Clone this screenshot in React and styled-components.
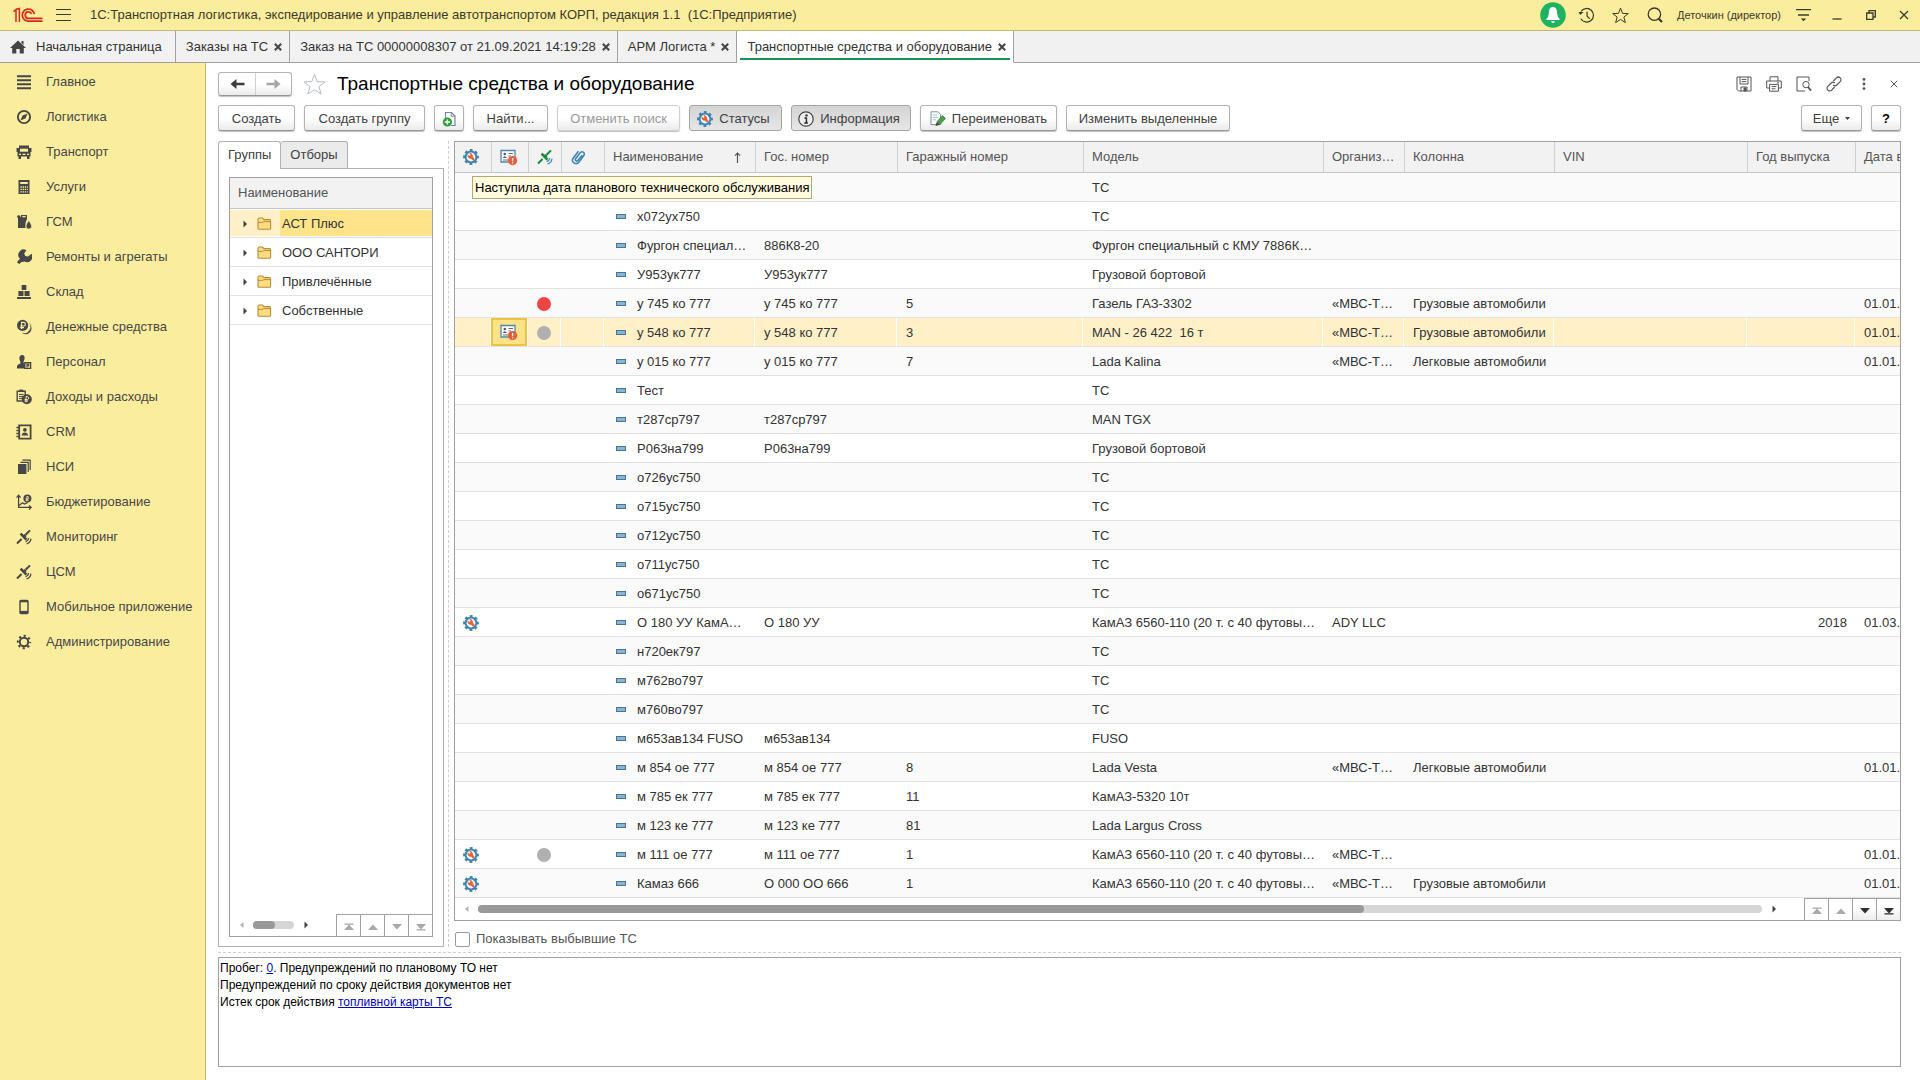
import React from 'react'
import styled, { createGlobalStyle, css } from 'styled-components'

const GlobalStyle = createGlobalStyle`
    * {
        box-sizing: border-box;
    }
    body {
        margin: 0;
        background: #fff;
        color: #333;
        font-family: "Liberation Sans", Arial, sans-serif;
        font-size: 13px;
        line-height: 16px;
    }
    button, input {
        font: inherit;
        color: inherit;
    }
    svg {
        display: block;
        flex: none;
    }
`

/* ---------- icons ---------- */

const Icon = ({ size = 16, w = size, h = size, box = 16, children, ...rest }) => (
    <svg
        width = {w}
        height = {h}
        viewBox = {typeof box === 'number' ? `0 0 ${box} ${box}` : box}
        fill = "none"
        stroke = "currentColor"
        aria-hidden = "true"
        {...rest}
    >
        { children }
    </svg>
)

const Logo = () => (
    <Icon w = {30} h = {16} box = "0 0 30 16" stroke = "#d5291f" strokeWidth = "1.5">
        <path d = "M0.4 4.6 L3 2.6 V15 M2.6 2.4 L6.4 1.4 V15"/>
        <path d = "M21.4 7 A6.1 6.1 0 1 0 15.3 14.2 H29.5" strokeWidth = "1.7"/>
        <path d = "M18.6 7 A3.3 3.3 0 1 0 15.3 11.4 H29.5" strokeWidth = "1.7"/>
    </Icon>
)

const MenuLines = () => (
    <Icon w = {15} h = {14} box = "0 0 15 14" strokeWidth = "1.2">
        <path d = "M0 1.5H15M0 6.5H15M0 12.5H15"/>
    </Icon>
)

const HomeIcon = () => (
    <Icon w = {16} h = {14} box = "0 0 16 14" fill = "#444" stroke = "none">
        <path d = "M8 0.5 L16 8 H13.8 V13.5 H9.7 V9 H6.3 V13.5 H2.2 V8 H0 Z M11.5 1 H13.5 V5 L11.5 3 Z"/>
    </Icon>
)

const Cross = ({ size = 8, weight = 2 }) => (
    <Icon size = {size} box = {8} strokeWidth = {weight}>
        <path d = "M0.8 0.8 L7.2 7.2 M7.2 0.8 L0.8 7.2"/>
    </Icon>
)

const GearWrench = () => (
    <Icon size = {16}>
        <circle cx = "8" cy = "8" r = "6.8" stroke = "#3d84b0" strokeWidth = "2.2" strokeDasharray = "2.8 2.54" strokeDashoffset = "1.4"/>
        <circle cx = "8" cy = "8" r = "5.4" stroke = "#3d84b0" strokeWidth = "2" fill = "#fff"/>
        <path d = "M4.8 5.4 L6.4 7 L7.6 5.8 L6.2 4.2 A3 3 0 0 1 9.9 7.7 L11.8 9.9 L10.2 11.7 L7.9 9.6 A3 3 0 0 1 4.8 5.4 Z" fill = "#e8603c" stroke = "none"/>
    </Icon>
)

const CardAlert = () => (
    <Icon w = {18} h = {17} box = "0 0 18 17">
        <path d = "M1 1.5 H15 V13 H1 Z" fill = "#fff" stroke = "#4e88ad" strokeWidth = "1.3"/>
        <circle cx = "4.8" cy = "5" r = "1.3" fill = "#555" stroke = "none"/>
        <path d = "M2.8 9 Q4.8 5.6 6.8 9 Z" fill = "#555" stroke = "none"/>
        <path d = "M8.5 4.5 H13 M8.5 7 H11 M3 11 H9" stroke = "#666"/>
        <circle cx = "12.6" cy = "11.6" r = "4.6" fill = "#ea5b3a" stroke = "none"/>
        <path d = "M12.6 9 V12.2 M12.6 13.2 V14.4" stroke = "#fff" strokeWidth = "1.3"/>
    </Icon>
)

const Satellite = ({ color = '#474747', wave = color, size = 16 }) => (
    <Icon size = {size} stroke = {color}>
        <path d = "M1 14.5 L5.6 10" strokeWidth = "2"/>
        <path d = "M4.6 4.6 L10.4 10.6" strokeWidth = "2.6"/>
        <path d = "M7.2 8.4 L9.6 6" strokeWidth = "3"/>
        <path d = "M9.6 5.8 L14 1.4" strokeWidth = "2"/>
        <path d = "M12.6 9 A4 4 0 0 1 9.6 12.6 M15 9.6 A6.4 6.4 0 0 1 10.4 15" stroke = {wave} strokeWidth = "1.2"/>
    </Icon>
)

const Clip = () => (
    <Icon size = {16} stroke = "#3f86b5" strokeWidth = "1.6">
        <path d = "M12.2 6.2 L7.8 11.4 C6.4 12.8 4.6 11.2 5.8 9.6 L10 4 C11.8 1.4 15.4 3.4 13.8 6.6 L9 13 C6.4 16.4 0.8 13.8 3 9.4 L8.4 2.2"/>
    </Icon>
)

const Folder = () => (
    <Icon w = {15} h = {13} box = "0 0 15 13">
        <path d = "M1 11.5 V2.5 Q1 1 2.2 1 H5.4 L7 2.6 H12.4 Q13.6 2.6 13.6 4 V11.5 Q13.6 12.3 12.8 12.3 H1.8 Q1 12.3 1 11.5 Z" fill = "#fbdc82" stroke = "#b98d35" strokeWidth = "1.1"/>
        <path d = "M1 5.4 H5.4 L6.8 4.6 H13.6" stroke = "#b98d35"/>
    </Icon>
)

const NewCopy = () => (
    <Icon w = {15} h = {16} box = "0 0 15 16">
        <path d = "M3.5 8 V1.5 H9.5 L13 5 V14.5 H9" fill = "#fff" stroke = "#75879a" strokeWidth = "1.2"/>
        <path d = "M9.3 1.5 V5.2 H13" stroke = "#75879a"/>
        <circle cx = "5.4" cy = "11" r = "4.6" fill = "#2f9e3c" stroke = "none"/>
        <path d = "M5.4 8.4 V13.6 M2.8 11 H8" stroke = "#fff" strokeWidth = "1.4"/>
    </Icon>
)

const InfoIcon = () => (
    <Icon size = {16}>
        <circle cx = "8" cy = "8" r = "7.2" strokeWidth = "1.2" stroke = "#444" fill = "#eee"/>
        <circle cx = "8.5" cy = "4.4" r = "1.2" fill = "#333" stroke = "none"/>
        <path d = "M6.4 7 H8.4 V11.6 M6.2 11.9 H10" stroke = "#333" strokeWidth = "1.5"/>
    </Icon>
)

const RenameIcon = () => (
    <Icon size = {16}>
        <path d = "M1 0.8 H8 L10.6 3.4 V13.6 H1 Z" fill = "#fff" stroke = "#7c8fa1"/>
        <path d = "M2.8 4 H7 M2.8 6.4 H8 M2.8 8.8 H6" stroke = "#a9b8c6"/>
        <path d = "M6.8 11 L12.4 4.6 L15.6 7.4 L9.8 13.6 Z" fill = "#49a24b" stroke = "#2c7a34" strokeWidth = "0.7"/>
        <path d = "M6.8 11 L9.8 13.6 L5.4 15.2 Z" fill = "#444" stroke = "none"/>
    </Icon>
)

const ArrowLong = ({ back }) => (
    <Icon w = {15} h = {12} box = "0 0 15 12" stroke = "none" fill = "currentColor">
        {back
            ? <path d = "M0.5 6 L6.5 1 V4.8 H14.5 V7.2 H6.5 V11 Z"/>
            : <path d = "M14.5 6 L8.5 1 V4.8 H0.5 V7.2 H8.5 V11 Z"/>}
    </Icon>
)

const Star = ({ size, color }) => (
    <Icon size = {size} box = {24} stroke = {color} strokeWidth = {24 / size}>
        <path d = "M12 1.5 L14.9 9 L23 9.3 L16.7 14.2 L18.9 22 L12 17.5 L5.1 22 L7.3 14.2 L1 9.3 L9.1 9 Z"/>
    </Icon>
)

const Triangle = ({ dir, bar }) => (
    <Icon w = {10} h = {8} box = "0 0 10 8" stroke = "none" fill = "currentColor">
        {dir === 'up' && <path d = "M0 7 L5 1.5 L10 7 Z"/>}
        {dir === 'down' && <path d = "M0 1 L5 6.5 L10 1 Z"/>}
        {dir === 'left' && <path d = "M6.5 1 V7 L3 4 Z"/>}
        {dir === 'right' && <path d = "M3.5 0.5 V7.5 L7 4 Z"/>}
        {bar && <path d = {dir === 'up' ? 'M0.5 0.5 H9.5 V1.8 H0.5 Z' : 'M0.5 6.2 H9.5 V7.5 H0.5 Z'}/>}
    </Icon>
)

const navIcons = {
    main: <path d = "M1 2.2H15M1 6.2H15M1 10.2H15M1 14.2H15" strokeWidth = "2"/>,
    compass: <>
        <circle cx = "8" cy = "8" r = "6.1" strokeWidth = "1.9"/>
        <path d = "M11.6 4.4 L9.4 9.4 L4.4 11.6 L6.6 6.6 Z" fill = "currentColor" stroke = "none"/>
    </>,
    truck: <>
        <path d = "M3 1.5 H13 V4 H15.5 V8 H14.5 V12.5 H13.5 V15 H11 V12.5 H5 V15 H2.5 V12.5 H1.5 V8 H0.5 V4 H3 Z" fill = "currentColor" stroke = "none"/>
        <path d = "M4 6.2 H12" stroke = "#fbed9e" strokeWidth = "3"/>
        <path d = "M3 10.4 H5 M6.5 10.4 H9.5 M11 10.4 H13" stroke = "#fbed9e" strokeWidth = "1.3"/>
    </>,
    calc: <>
        <path d = "M2.5 1 H13.5 V15 H2.5 Z" fill = "currentColor" stroke = "none"/>
        <path d = "M4.2 4 H11.8" stroke = "#fbed9e" strokeWidth = "2"/>
        <path d = "M4.4 8H11.8M4.4 10.4H11.8M4.4 12.8H11.8" stroke = "#fbed9e" strokeWidth = "1.3" strokeDasharray = "1.4 0.8"/>
    </>,
    fuel: <>
        <path d = "M1 2 L3 1 L5 3 V1 H11 V5 L9.5 9 V14 H2 V5 Z" fill = "currentColor" stroke = "none"/>
        <path d = "M6.4 2.6 H9.6" stroke = "#fbed9e" strokeWidth = "1.3"/>
        <path d = "M12.8 6.5 Q15.6 10.4 15.6 12.2 A2.8 2.8 0 0 1 10 12.2 Q10 10.4 12.8 6.5 Z" fill = "currentColor" stroke = "#fbed9e" strokeWidth = "0.7"/>
    </>,
    wrench: <path d = "M2.2 11.6 L4 9.8 A5.4 5.4 0 0 1 10.4 1.2 L8.2 4.4 L9.2 7 L12 7.6 L15.4 4.8 A5.4 5.4 0 0 1 8.4 12.6 L5 13.2 L3.6 15 L1 13.6 Z" fill = "currentColor" stroke = "none"/>,
    stock: <path d = "M5.6 1 H10.4 V6 H5.6 Z M2.4 7 H7.5 V12 H2.4 Z M8.5 7 H13.6 V12 H8.5 Z M1 13 H15 V15 H1 Z" fill = "currentColor" stroke = "none"/>,
    coins: <>
        <path d = "M12.6 3.6 A6.2 6.2 0 0 1 5.6 13.6 A5.8 5.8 0 0 0 15.4 9 A6 6 0 0 0 12.6 3.6 Z" fill = "currentColor" stroke = "none"/>
        <circle cx = "6.6" cy = "6.4" r = "5.6" fill = "currentColor" stroke = "none"/>
        <path d = "M5.6 10 V3.4 H7.6 A1.8 1.8 0 0 1 7.6 7 H4.2 M4.2 8.6 H8" stroke = "#fbed9e" strokeWidth = "1.1"/>
    </>,
    person: <>
        <path d = "M6 1 C8.6 1 9 3.4 8.4 5.4 L7.6 7.4 V9 L9 10 V14.6 H1 V12.2 Q1 10.8 4.4 9.6 V7.4 C2.8 5 3 1 6 1 Z" fill = "currentColor" stroke = "none"/>
        <path d = "M8.8 8.8 H14.6 V14.4 H8.8 Z" strokeWidth = "1.4" fill = "#fbed9e"/>
        <path d = "M11 13.4 V10.4 H12.6 V12 H11" strokeWidth = "1.1"/>
    </>,
    income: <>
        <path d = "M1.2 2.2 H9.2 V12 H1.2 Z" strokeWidth = "1.4"/>
        <path d = "M3.2 0.6 H7.2 V3 H3.2 Z" fill = "currentColor" stroke = "none"/>
        <path d = "M3 5.4 H7.6 M3 7.4 H7 M3 9.4 H6"/>
        <circle cx = "10.8" cy = "10.2" r = "5" fill = "currentColor" stroke = "none"/>
        <path d = "M10 13.4 V7.6 H11.6 A1.6 1.6 0 0 1 11.6 10.6 H8.6 M8.6 12 H12" stroke = "#fbed9e"/>
    </>,
    crm: <>
        <path d = "M3.2 1.4 H14.6 V14.6 H3.2 Z" strokeWidth = "1.8"/>
        <path d = "M0.4 3.4H3M0.4 6.4H3M0.4 9.4H3M0.4 12.4H3" strokeWidth = "1.5"/>
        <circle cx = "8.9" cy = "5.8" r = "1.9" fill = "currentColor" stroke = "none"/>
        <path d = "M5.6 11.6 Q5.8 8.8 8.9 8.4 Q12 8.8 12.2 11.6 Z" fill = "currentColor" stroke = "none"/>
    </>,
    docs: <>
        <path d = "M2 5 H10.4 V15 H2 Z" fill = "currentColor" stroke = "none"/>
        <path d = "M4.4 3.4 H12.2 V13 M6.4 1.2 H14.2 V11" strokeWidth = "1.2"/>
    </>,
    budget: <>
        <path d = "M2.6 1.4 V13.4 H15 M0.6 3.6 L2.6 1.2 L4.6 3.6 M13 11.4 L15.2 13.4 L13 15.4" strokeWidth = "1.3"/>
        <path d = "M3 11.4 L6.6 8.8 L8.4 10 L11.6 8.6" strokeWidth = "1.2"/>
        <circle cx = "11.4" cy = "4.6" r = "4" fill = "currentColor" stroke = "none"/>
        <path d = "M10.8 7.4 V2.6 H12.2 V5 H9.6 M9.6 6.2 H12.6" stroke = "#fbed9e" strokeWidth = "0.9"/>
    </>,
    phone: <>
        <path d = "M5 1.5 H11 Q12 1.5 12 2.5 V13.5 Q12 14.5 11 14.5 H5 Q4 14.5 4 13.5 V2.5 Q4 1.5 5 1.5 Z" strokeWidth = "1.4"/>
        <path d = "M4 13.2 H12" strokeWidth = "2.6"/>
        <path d = "M4 2.6 H12" strokeWidth = "1.4"/>
    </>,
    gear: <>
        <circle cx = "8" cy = "8" r = "6.2" strokeWidth = "2" strokeDasharray = "2.2 2.67" strokeDashoffset = "1.1"/>
        <circle cx = "8" cy = "8" r = "4.2" strokeWidth = "2"/>
    </>
}

const NavIcon = ({ name }) => (
    name === 'satellite' ? <Satellite/> : <Icon size = {16}>{ navIcons[name] }</Icon>
)

/* ---------- data ---------- */

const sections = [
    ['main', 'Главное'],
    ['compass', 'Логистика'],
    ['truck', 'Транспорт'],
    ['calc', 'Услуги'],
    ['fuel', 'ГСМ'],
    ['wrench', 'Ремонты и агрегаты'],
    ['stock', 'Склад'],
    ['coins', 'Денежные средства'],
    ['person', 'Персонал'],
    ['income', 'Доходы и расходы'],
    ['crm', 'CRM'],
    ['docs', 'НСИ'],
    ['budget', 'Бюджетирование'],
    ['satellite', 'Мониторинг'],
    ['satellite', 'ЦСМ'],
    ['phone', 'Мобильное приложение'],
    ['gear', 'Администрирование']
]

const openTabs = [
    { title: 'Заказы на ТС' },
    { title: 'Заказ на ТС 00000008307 от 21.09.2021 14:19:28' },
    { title: 'АРМ Логиста *' },
    { title: 'Транспортные средства и оборудование', active: true }
]

const groups = ['АСТ Плюс', 'ООО САНТОРИ', 'Привлечённые', 'Собственные']

const vehicles = [
    { model: 'ТС' },
    { name: 'х072ух750', model: 'ТС' },
    { name: 'Фургон специал…', plate: '886К8-20', model: 'Фургон специальный с КМУ 7886К…' },
    { name: 'У953ук777', plate: 'У953ук777', model: 'Грузовой бортовой' },
    { dot: '#ee4444', name: 'у 745 ко 777', plate: 'у 745 ко 777', garage: '5', model: 'Газель ГАЗ-3302', org: '«МВС-Т…', column: 'Грузовые автомобили', date: '01.01.' },
    { selected: true, card: true, dot: '#b0b0b0', name: 'у 548 ко 777', plate: 'у 548 ко 777', garage: '3', model: 'MAN - 26 422  16 т', org: '«МВС-Т…', column: 'Грузовые автомобили', date: '01.01.' },
    { name: 'у 015 ко 777', plate: 'у 015 ко 777', garage: '7', model: 'Lada Kalina', org: '«МВС-Т…', column: 'Легковые автомобили', date: '01.01.' },
    { name: 'Тест', model: 'ТС' },
    { name: 'т287ср797', plate: 'т287ср797', model: 'MAN TGX' },
    { name: 'Р063на799', plate: 'Р063на799', model: 'Грузовой бортовой' },
    { name: 'о726ус750', model: 'ТС' },
    { name: 'о715ус750', model: 'ТС' },
    { name: 'о712ус750', model: 'ТС' },
    { name: 'о711ус750', model: 'ТС' },
    { name: 'о671ус750', model: 'ТС' },
    { service: true, name: 'О 180 УУ КамА…', plate: 'О 180 УУ', model: 'КамАЗ 6560-110 (20 т. с 40 футовы…', org: 'ADY LLC', year: '2018', date: '01.03.' },
    { name: 'н720ек797', model: 'ТС' },
    { name: 'м762во797', model: 'ТС' },
    { name: 'м760во797', model: 'ТС' },
    { name: 'м653ав134 FUSO', plate: 'м653ав134', model: 'FUSO' },
    { name: 'м 854 ое 777', plate: 'м 854 ое 777', garage: '8', model: 'Lada Vesta', org: '«МВС-Т…', column: 'Легковые автомобили', date: '01.01.' },
    { name: 'м 785 ек 777', plate: 'м 785 ек 777', garage: '11', model: 'КамАЗ-5320 10т' },
    { name: 'м 123 ке 777', plate: 'м 123 ке 777', garage: '81', model: 'Lada Largus Cross' },
    { service: true, dot: '#b0b0b0', name: 'м 111 ое 777', plate: 'м 111 ое 777', garage: '1', model: 'КамАЗ 6560-110 (20 т. с 40 футовы…', org: '«МВС-Т…', date: '01.01.' },
    { service: true, name: 'Камаз 666', plate: 'О 000 ОО 666', garage: '1', model: 'КамАЗ 6560-110 (20 т. с 40 футовы…', org: '«МВС-Т…', column: 'Грузовые автомобили', date: '01.01.' }
]

/* ---------- page parts ---------- */

const TopBar = () => (
    <TopBarRoot>
        <Logo/>
        <PlainButton aria-label = "Главное меню"><MenuLines/></PlainButton>
        <AppTitle>1С:Транспортная логистика, экспедирование и управление автотранспортом КОРП, редакция 1.1  (1С:Предприятие)</AppTitle>
        <TopTools>
            <ToolSlot aria-label = "Оповещения">
                <Icon w = {26} h = {26} box = "0 0 26 26" stroke = "none">
                    <circle cx = "13" cy = "13" r = "12.8" fill = "#1fb261"/>
                    <path d = "M13 5 C16.4 5 17 8 17.2 11.5 Q17.4 15 19.6 16.8 V18 H6.4 V16.8 Q8.6 15 8.8 11.5 C9 8 9.6 5 13 5 Z M11 19.2 H15 Q14.6 21 13 21 Q11.4 21 11 19.2 Z" fill = "#fff"/>
                </Icon>
            </ToolSlot>
            <ToolSlot aria-label = "История">
                <Icon size = {17} box = {18} strokeWidth = "1.3">
                    <path d = "M3.2 4.8 A7.2 7.2 0 1 1 3 12.4 M9.6 5 V9.6 L12.4 12.4"/>
                    <path d = "M0.4 5.2 H5.8 L2.6 8.4 Z" fill = "currentColor" stroke = "none"/>
                </Icon>
            </ToolSlot>
            <ToolSlot aria-label = "Избранное"><Star size = {17} color = "#3c3a2a"/></ToolSlot>
            <ToolSlot aria-label = "Поиск">
                <Icon size = {16} strokeWidth = "1.3">
                    <circle cx = "7.4" cy = "7.2" r = "6.2"/>
                    <path d = "M11.8 11.8 L15 15" strokeWidth = "2.2"/>
                </Icon>
            </ToolSlot>
            <UserName>Деточкин (директор)</UserName>
            <ToolSlot aria-label = "Сервис">
                <Icon w = {15} h = {14} box = "0 0 15 14" strokeWidth = "1.3">
                    <path d = "M0 1.6 H15 M2 7 H13"/>
                    <path d = "M4.8 10.4 H10.2 L7.5 13.2 Z" fill = "currentColor" stroke = "none"/>
                </Icon>
            </ToolSlot>
            <ToolSlot aria-label = "Свернуть"><Icon size = {10} box = {10} strokeWidth = "1.3"><path d = "M0.5 9 H9.5"/></Icon></ToolSlot>
            <ToolSlot aria-label = "Развернуть">
                <Icon size = {10} box = {10} strokeWidth = "1.3"><path d = "M0.7 3 H7 V9.3 H0.7 Z M3 3 V0.7 H9.3 V7 H7"/></Icon>
            </ToolSlot>
            <ToolSlot aria-label = "Закрыть"><Cross size = {10} weight = {1}/></ToolSlot>
        </TopTools>
    </TopBarRoot>
)

const WindowTabs = () => (
    <TabStrip>
        <WindowTab $home>
            <HomeIcon/>
            Начальная страница
        </WindowTab>
        {openTabs.map(tab => (
            <WindowTab key = {tab.title} $active = {tab.active}>
                <span>{tab.title}</span>
                <CloseTab aria-label = "Закрыть вкладку"><Cross/></CloseTab>
            </WindowTab>
        ))}
        <TabFiller/>
    </TabStrip>
)

const FormHeader = () => (
    <HeaderRow>
        <NavGroup>
            <NavButton aria-label = "Назад"><ArrowLong back/></NavButton>
            <NavButton aria-label = "Вперед" disabled><ArrowLong/></NavButton>
        </NavGroup>
        <PlainButton aria-label = "В избранное"><Star size = {23} color = "#b5bac2"/></PlainButton>
        <h1>Транспортные средства и оборудование</h1>
        <FormTools>
            <FormTool aria-label = "Сохранить">
                <Icon><path d = "M1 1 H15 V15 H2.6 L1 13.4 Z M4 1 V8 H12 V1 M5.6 3.4 H10.4 M5.6 5.6 H10.4 M5 15 V11 H11 V15"/><path d = "M8 12 H10 V15 H8 Z" fill = "currentColor"/></Icon>
            </FormTool>
            <FormTool aria-label = "Печать">
                <Icon><path d = "M4 5 V0.8 H12 V5 M3.6 12 H0.7 V5 H15.3 V12 H12.4 M3.6 8.4 H12.4 V15.2 H3.6 Z M5.6 10.6 H10.4 M5.6 12.8 H9.4 M11 6.8 H13"/></Icon>
            </FormTool>
            <FormTool aria-label = "Предварительный просмотр">
                <Icon><path d = "M13 5 V1 H1 V15 H9"/><circle cx = "10" cy = "8.6" r = "3.2"/><path d = "M12 11 L15 14.6" strokeWidth = "1.8"/></Icon>
            </FormTool>
            <FormTool aria-label = "Ссылка">
                <Icon strokeWidth = "1.2"><path d = "M7.4 5 L10.4 1.9 A2.6 2.6 0 0 1 14.2 5.6 L10.8 9 A2.6 2.6 0 0 1 7.2 9 M8.6 11 L5.6 14.1 A2.6 2.6 0 0 1 1.8 10.4 L5.2 7 A2.6 2.6 0 0 1 8.8 7"/></Icon>
            </FormTool>
            <FormTool aria-label = "Еще">
                <Icon fill = "currentColor" stroke = "none"><circle cx = "8" cy = "3.4" r = "1.4"/><circle cx = "8" cy = "8" r = "1.4"/><circle cx = "8" cy = "12.6" r = "1.4"/></Icon>
            </FormTool>
            <FormTool aria-label = "Закрыть"><Cross weight = {1}/></FormTool>
        </FormTools>
    </HeaderRow>
)

const Toolbar = () => (
    <ToolbarRow>
        <Button $w = {77}>Создать</Button>
        <Button $w = {121}>Создать группу</Button>
        <Button $w = {30} aria-label = "Скопировать"><NewCopy/></Button>
        <Button $w = {75}>Найти...</Button>
        <Button $w = {123} disabled>Отменить поиск</Button>
        <Button $w = {93} $pressed><GearWrench/>Статусы</Button>
        <Button $w = {120} $pressed><InfoIcon/>Информация</Button>
        <Button $w = {137}><RenameIcon/>Переименовать</Button>
        <Button $w = {164}>Изменить выделенные</Button>
        <Spacer/>
        <Button $w = {61}>
            Еще
            <Icon w = {5} h = {3} box = "0 0 5 3" fill = "currentColor" stroke = "none"><path d = "M0 0 H5 L2.5 3 Z"/></Icon>
        </Button>
        <Button $w = {30} $dark>?</Button>
    </ToolbarRow>
)

const Pager = ({ forward }) => (
    <PagerRoot>
        <PagerButton disabled aria-label = "В начало"><Triangle dir = "up" bar/></PagerButton>
        <PagerButton disabled aria-label = "Вверх"><Triangle dir = "up"/></PagerButton>
        <PagerButton disabled = {!forward} aria-label = "Вниз"><Triangle dir = "down"/></PagerButton>
        <PagerButton disabled = {!forward} aria-label = "В конец"><Triangle dir = "down" bar/></PagerButton>
    </PagerRoot>
)

const GroupsPanel = () => (
    <SidePanel>
        <PanelTabs>
            <PanelTab $active>Группы</PanelTab>
            <PanelTab>Отборы</PanelTab>
        </PanelTabs>
        <PanelBody>
            <Tree>
                <TreeHead>Наименование</TreeHead>
                {groups.map((group, i) => (
                    <TreeRow key = {group}>
                        <TreeMarks $active = {i === 0}><Triangle dir = "right"/><Folder/></TreeMarks>
                        <TreeName $active = {i === 0}>{group}</TreeName>
                    </TreeRow>
                ))}
                <Spacer/>
                <ScrollRow>
                    <ScrollArrow $muted><Triangle dir = "left"/></ScrollArrow>
                    <Track $w = "41px"><Thumb $w = "53%"/></Track>
                    <ScrollArrow><Triangle dir = "right"/></ScrollArrow>
                    <Spacer/>
                    <Pager/>
                </ScrollRow>
            </Tree>
        </PanelBody>
    </SidePanel>
)

const VehicleRow = ({ item }) => (
    <Row $selected = {item.selected}>
        <IconCell>{item.service && <GearWrench/>}</IconCell>
        <IconCell $current = {item.card}>{item.card && <CardAlert/>}</IconCell>
        <IconCell>{item.dot && <Dot $color = {item.dot}/>}</IconCell>
        <IconCell/>
        <Cell>{item.name && <NameBox><Dash/>{item.name}</NameBox>}</Cell>
        <Cell>{item.plate}</Cell>
        <Cell>{item.garage}</Cell>
        <Cell>{item.model}</Cell>
        <Cell>{item.org}</Cell>
        <Cell>{item.column}</Cell>
        <Cell/>
        <Cell $right>{item.year}</Cell>
        <Cell>{item.date}</Cell>
    </Row>
)

const VehicleList = () => (
    <ListColumn>
        <ListFrame>
            <Table>
                <colgroup>
                    {[36, 37, 33, 43, 151, 142, 186, 240, 81, 150, 193, 108].map((width, i) => <Col key = {i} $w = {width}/>)}
                    <col/>
                </colgroup>
                <thead>
                    <tr>
                        <HeadCell $icon aria-label = "Состояние"><GearWrench/></HeadCell>
                        <HeadCell $icon aria-label = "Документы"><CardAlert/></HeadCell>
                        <HeadCell $icon aria-label = "Мониторинг"><Satellite color = "#178a3e" wave = "#3f86b5"/></HeadCell>
                        <HeadCell $icon aria-label = "Файлы"><Clip/></HeadCell>
                        <HeadCell>
                            <SortBox>
                                Наименование
                                <Icon w = {7} h = {11} box = "0 0 7 11" strokeWidth = "1.2"><path d = "M3.5 11 V1 M1 3.6 L3.5 1 L6 3.6"/></Icon>
                            </SortBox>
                        </HeadCell>
                        <HeadCell>Гос. номер</HeadCell>
                        <HeadCell>Гаражный номер</HeadCell>
                        <HeadCell>Модель</HeadCell>
                        <HeadCell>Организ…</HeadCell>
                        <HeadCell>Колонна</HeadCell>
                        <HeadCell>VIN</HeadCell>
                        <HeadCell>Год выпуска</HeadCell>
                        <HeadCell>Дата в</HeadCell>
                    </tr>
                </thead>
                <tbody>
                    {vehicles.map((item, i) => <VehicleRow key = {i} item = {item}/>)}
                </tbody>
            </Table>
            <Spacer/>
            <ScrollRow>
                <ScrollArrow $muted><Triangle dir = "left"/></ScrollArrow>
                <Track><Thumb $w = "69%"/></Track>
                <ScrollArrow><Triangle dir = "right"/></ScrollArrow>
                <PagerGap/>
                <Pager forward/>
            </ScrollRow>
            <Tooltip role = "tooltip">Наступила дата планового технического обслуживания</Tooltip>
        </ListFrame>
        <CheckLabel>
            <CheckBox type = "checkbox"/>
            Показывать выбывшие ТС
        </CheckLabel>
    </ListColumn>
)

const App = () => (
    <Page>
        <GlobalStyle/>
        <TopBar/>
        <WindowTabs/>
        <Body>
            <Sections>
                {sections.map(([icon, title]) => (
                    <SectionLink key = {title} href = "#"><NavIcon name = {icon}/>{title}</SectionLink>
                ))}
            </Sections>
            <Main>
                <FormHeader/>
                <Toolbar/>
                <Workspace>
                    <GroupsPanel/>
                    <Splitter/>
                    <VehicleList/>
                </Workspace>
                <InfoBox>
                    <div>Пробег: <a href = "#">0</a>. Предупреждений по плановому ТО нет</div>
                    <div>Предупреждений по сроку действия документов нет</div>
                    <div>Истек срок действия <a href = "#">топливной карты ТС</a></div>
                </InfoBox>
            </Main>
        </Body>
    </Page>
)

/* ---------- styles ---------- */

const Page = styled.div`
    min-height: 100vh;
    display: flex;
    flex-direction: column;
`

const Spacer = styled.div`
    flex: 1;
`

const PlainButton = styled.button`
    display: flex;
    align-items: center;
    justify-content: center;
    padding: 0;
    border: 0;
    background: none;
`

const TopBarRoot = styled.header`
    display: flex;
    align-items: center;
    height: 31px;
    padding-left: 13px;
    gap: 13px;
    background: #fbed9e;
    border-bottom: 1px solid #c4b878;
    color: #3c3a2a;
`

const AppTitle = styled.div`
    margin-left: 6px;
    flex: 1;
    white-space: pre;
    overflow: hidden;
`

const TopTools = styled.div`
    display: flex;
    align-items: center;
    height: 30px;
`

const ToolSlot = styled(PlainButton)`
    width: 34px;
    height: 30px;
    &:last-child {
        width: 32px;
    }
`

const UserName = styled.div`
    padding: 0 5px;
    font-size: 11px;
`

const TabStrip = styled.nav`
    display: flex;
    height: 32px;
    background: #f1f1f1;
`

const WindowTab = styled.div`
    display: flex;
    align-items: center;
    gap: 6px;
    padding: 0 7px 0 10px;
    border-right: 1px solid #a0a0a0;
    border-bottom: 1px solid #a0a0a0;
    white-space: nowrap;
    ${p => p.$home && css`
        gap: 10px;
        padding: 0 13px 0 10px;
    `}
    ${p => p.$active && css`
        background: linear-gradient(#129556, #129556) center 27px / calc(100% - 6px) 2px no-repeat #fff;
        border-bottom-color: #fff;
    `}
`

const CloseTab = styled(PlainButton)`
    color: #444;
`

const TabFiller = styled.div`
    flex: 1;
    border-bottom: 1px solid #a0a0a0;
`

const Body = styled.div`
    flex: 1;
    display: flex;
`

const Sections = styled.nav`
    flex: none;
    width: 206px;
    background: #fbed9e;
    border-right: 1px solid #c4b878;
`

const SectionLink = styled.a`
    display: flex;
    align-items: center;
    gap: 14px;
    height: 35px;
    padding: 2px 0 0 16px;
    color: #474747;
    text-decoration: none;
`

const Main = styled.main`
    flex: 1;
    min-width: 0;
    display: flex;
    flex-direction: column;
    padding: 0 19px 13px 12px;
`

const HeaderRow = styled.div`
    display: flex;
    align-items: center;
    height: 42px;
    gap: 11px;
    h1 {
        margin: 0;
        flex: 1;
        font-size: 19px;
        line-height: 24px;
        font-weight: normal;
        color: #000;
    }
`

const raised = css`
    border: 1px solid #b4b4b4;
    border-bottom-color: #969696;
    border-radius: 3px;
    background: linear-gradient(#fff 50%, #ebebeb);
    box-shadow: 0 1px 1px #c0c0c0;
`

const NavGroup = styled.div`
    display: flex;
    height: 24px;
    ${raised}
`

const NavButton = styled(PlainButton)`
    width: 36px;
    color: #3c3c3c;
    &:disabled {
        color: #a6a6a6;
    }
    & + & {
        border-left: 1px solid #d0d0d0;
    }
`

const FormTools = styled.div`
    display: flex;
    margin-right: -8px;
    color: #555;
`

const FormTool = styled(PlainButton)`
    width: 30px;
    height: 24px;
`

const ToolbarRow = styled.div`
    display: flex;
    gap: 9px;
    margin-bottom: 10px;
`

const Button = styled.button`
    display: flex;
    align-items: center;
    justify-content: center;
    gap: 6px;
    width: ${p => p.$w}px;
    height: 26px;
    padding: 1px 0 0;
    white-space: nowrap;
    color: ${p => p.$dark ? '#000' : '#404040'};
    font-weight: ${p => p.$dark ? 'bold' : 'normal'};
    ${raised}
    ${p => p.$pressed && css`
        padding-right: 4px;
        background: linear-gradient(#d4d4d4, #e6e6e6);
        border-color: #a4a4a4;
        box-shadow: none;
    `}
    &:disabled {
        color: #999;
        border-color: #cfcfcf;
    }
`

const Workspace = styled.div`
    flex: 1;
    display: flex;
    padding-bottom: 5px;
    margin-bottom: 4px;
    border-bottom: 1px dashed #cfcfcf;
`

const Splitter = styled.div`
    width: 6px;
    margin-left: 4px;
    border-left: 1px dashed #cfcfcf;
`

const SidePanel = styled.section`
    flex: none;
    width: 226px;
    display: flex;
    flex-direction: column;
`

const PanelTabs = styled.div`
    display: flex;
    height: 27px;
`

const PanelTab = styled.button`
    height: 27px;
    padding: 0 9px;
    border: 1px solid #b0b0b0;
    border-bottom: 0;
    border-radius: 3px 3px 0 0;
    background: #ebebeb;
    color: #404040;
    & + & {
        border-left: 0;
    }
    ${p => p.$active && css`
        height: 28px;
        padding-bottom: 1px;
        background: #fff;
        z-index: 1;
    `}
`

const PanelBody = styled.div`
    flex: 1;
    display: flex;
    padding: 8px 10px 9px;
    border: 1px solid #b0b0b0;
`

const Tree = styled.div`
    flex: 1;
    display: flex;
    flex-direction: column;
    border: 1px solid #a0a0a0;
`

const TreeHead = styled.div`
    height: 31px;
    padding: 7px 8px;
    background: #f2f2f2;
    border-bottom: 1px solid #c4c4c4;
    color: #555;
`

const TreeRow = styled.div`
    display: flex;
    height: 29px;
    padding: 1px 0;
    border-bottom: 1px solid #e2e2e2;
`

const TreeMarks = styled.div`
    display: flex;
    align-items: center;
    gap: 7px;
    width: 50px;
    padding: 1px 0 0 10px;
    color: #404040;
    background: ${p => p.$active ? '#fff0c8' : 'none'};
`

const TreeName = styled.div`
    flex: 1;
    display: flex;
    align-items: center;
    padding: 1px 0 0 2px;
    background: ${p => p.$active ? '#ffe48c' : 'none'};
`

const ScrollRow = styled.div`
    display: flex;
    align-items: center;
    height: 22px;
`

const ScrollArrow = styled.div`
    display: flex;
    justify-content: center;
    width: 23px;
    color: ${p => p.$muted ? '#b4b4b4' : '#404040'};
`

const Track = styled.div`
    width: ${p => p.$w || 'auto'};
    flex: ${p => p.$w ? 'none' : 1};
    height: 8px;
    border-radius: 4px;
    background: #d6d6d6;
`

const Thumb = styled.div`
    width: ${p => p.$w};
    height: 8px;
    border-radius: 4px;
    background: #999;
`

const PagerGap = styled.div`
    width: 19px;
`

const PagerRoot = styled.div`
    display: flex;
    height: 22px;
    border-top: 1px solid #a0a0a0;
`

const PagerButton = styled(PlainButton)`
    width: 24px;
    padding-top: 2px;
    border-left: 1px solid #a0a0a0;
    background: linear-gradient(#fff 40%, #ececec);
    color: #303030;
    &:disabled {
        background: #fff;
        color: #a8a8a8;
    }
`

const ListColumn = styled.section`
    flex: 1;
    min-width: 0;
    display: flex;
    flex-direction: column;
`

const ListFrame = styled.div`
    position: relative;
    flex: 1;
    display: flex;
    flex-direction: column;
    border: 1px solid #a0a0a0;
    overflow: hidden;
`

const Table = styled.table`
    width: 100%;
    table-layout: fixed;
    border-collapse: separate;
    border-spacing: 0;
`

const Col = styled.col`
    width: ${p => p.$w}px;
`

const HeadCell = styled.th`
    height: 31px;
    padding: 0 0 0 8px;
    text-align: left;
    font-weight: normal;
    white-space: nowrap;
    overflow: hidden;
    color: #555;
    background: #f2f2f2;
    border-bottom: 1px solid #c4c4c4;
    & + & {
        border-left: 1px solid #cfcfcf;
    }
`

const SortBox = styled.div`
    display: flex;
    align-items: center;
    justify-content: space-between;
    padding-right: 14px;
`

const Cell = styled.td`
    height: 29px;
    padding: 1px 0 0 9px;
    white-space: pre;
    overflow: hidden;
    border-bottom: 1px solid #e2e2e2;
    ${p => p.$right && css`
        padding-right: 8px;
        text-align: right;
    `}
`

const IconCell = styled(Cell)`
    padding-left: 9px;
    &:first-child {
        padding-left: 8px;
    }
    ${p => p.$current && css`
        && {
            background: #fde28a;
            box-shadow: inset 0 0 0 2px #ecc440;
        }
    `}
`

const Row = styled.tr`
    &:nth-child(odd) {
        background: #fafafa;
    }
    ${p => p.$selected && css`
        && {
            background: #fff0c8;
        }
        td:not(:last-child) {
            border-right: 1px solid #fff;
        }
    `}
`

const NameBox = styled.div`
    display: flex;
    align-items: center;
    gap: 11px;
    padding-left: 3px;
`

const Dash = styled.span`
    flex: none;
    width: 10px;
    height: 5px;
    background: #8db4cd;
    border: 1px solid #44749a;
`

const Dot = styled.div`
    width: 14px;
    height: 14px;
    border-radius: 50%;
    background: ${p => p.$color};
`

const Tooltip = styled.div`
    position: absolute;
    top: 34px;
    left: 17px;
    height: 23px;
    padding: 3px 2px;
    border: 1px solid #b0a878;
    background: #fffbdc;
    color: #000;
    line-height: 16px;
    white-space: nowrap;
`

const CheckLabel = styled.label`
    display: flex;
    align-items: center;
    gap: 6px;
    height: 16px;
    margin: 10px 0 0 1px;
    color: #555;
`

const CheckBox = styled.input`
    appearance: none;
    width: 15px;
    height: 15px;
    margin: 0;
    border: 1px solid #999;
    border-radius: 2px;
    background: #fff;
`

const InfoBox = styled.div`
    height: 110px;
    padding: 2px 1px;
    border: 1px solid #a0a0a0;
    color: #000;
    font-size: 12px;
    line-height: 17px;
    a {
        color: #0000c0;
    }
`

export default App
